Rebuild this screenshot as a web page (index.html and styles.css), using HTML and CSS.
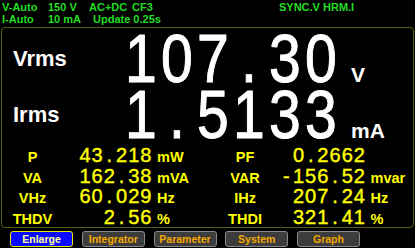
FILE: index.html
```html
<!DOCTYPE html>
<html lang="en">
<head>
  <meta charset="UTF-8">
  <meta name="viewport" content="width=device-width, initial-scale=1.0">
  <title>Power Meter</title>
  <link rel="stylesheet" href="styles.css">
</head>
<body>
  <div class="status">
    <div class="status-line">
      <span>V-Auto</span><span>150 V</span><span>AC+DC</span><span>CF3</span><span>SYNC.V</span><span>HRM.I</span>
    </div>
    <div class="status-line">
      <span>I-Auto</span><span>10 mA</span><span class="update">Update 0.25s</span>
    </div>
  </div>

  <div class="panel">
    <div class="main-row">
      <div class="main-label">Vrms</div>
      <div class="main-value"><span>1</span><span>0</span><span>7</span><span>.</span><span>3</span><span>0</span></div>
      <div class="main-unit">V</div>
    </div>
    <div class="main-row">
      <div class="main-label">Irms</div>
      <div class="main-value"><span>1</span><span>.</span><span>5</span><span>1</span><span>3</span><span>3</span></div>
      <div class="main-unit">mA</div>
    </div>

    <div class="readings">
      <div class="r-label">P</div>
      <div class="r-value"><span>4</span><span>3</span><span>.</span><span>2</span><span>1</span><span>8</span></div>
      <div class="r-unit">mW</div>
      <div class="r-label">PF</div>
      <div class="r-value"><span>0</span><span>.</span><span>2</span><span>6</span><span>6</span><span>2</span></div>
      <div class="r-unit"></div>

      <div class="r-label">VA</div>
      <div class="r-value"><span>1</span><span>6</span><span>2</span><span>.</span><span>3</span><span>8</span></div>
      <div class="r-unit">mVA</div>
      <div class="r-label">VAR</div>
      <div class="r-value"><span>-</span><span>1</span><span>5</span><span>6</span><span>.</span><span>5</span><span>2</span></div>
      <div class="r-unit">mvar</div>

      <div class="r-label">VHz</div>
      <div class="r-value"><span>6</span><span>0</span><span>.</span><span>0</span><span>2</span><span>9</span></div>
      <div class="r-unit">Hz</div>
      <div class="r-label">IHz</div>
      <div class="r-value"><span>2</span><span>0</span><span>7</span><span>.</span><span>2</span><span>4</span></div>
      <div class="r-unit">Hz</div>

      <div class="r-label">THDV</div>
      <div class="r-value"><span>2</span><span>.</span><span>5</span><span>6</span></div>
      <div class="r-unit">%</div>
      <div class="r-label">THDI</div>
      <div class="r-value"><span>3</span><span>2</span><span>1</span><span>.</span><span>4</span><span>1</span></div>
      <div class="r-unit">%</div>
    </div>
  </div>

  <div class="softkeys">
    <div class="key active">Enlarge</div>
    <div class="key">Integrator</div>
    <div class="key">Parameter</div>
    <div class="key">System</div>
    <div class="key">Graph</div>
  </div>
</body>
</html>
```

FILE: styles.css
```css
body {
  margin: 0;
  background-color: #000;
  font-family: "Liberation Sans", Arial, sans-serif;
  color: #fff;
  overflow: hidden;
}
.status {
  height: 27px;
  box-sizing: border-box;
  padding: 2px 0 0 2px;
  color: #22dd22;
  font-size: 11px;
  font-weight: bold;
  line-height: 11.5px;
}
.status-line {
  display: grid;
  grid-template-columns: 46px 41px 43px 147px 44px auto;
  white-space: nowrap;
}
.status-line .update {
  grid-column: span 2;
  padding-left: 4px;
}
.panel {
  margin-left: 1px;
  width: 413px;
  height: 201px;
  box-sizing: border-box;
  border: 1px solid #5c5c14;
  border-radius: 4px;
  padding: 2px 0 0 8px;
}
.main-row {
  display: flex;
  align-items: baseline;
  height: 56px;
}
.main-label {
  align-self: flex-start;
  width: 110px;
  padding-left: 3px;
  margin-top: 18px;
  font-size: 22px;
  font-weight: bold;
  line-height: 22px;
}
.main-value {
  display: flex;
  font-size: 68px;
  line-height: 56px;
  -webkit-text-stroke: 1px #fff;
}
.main-value span {
  display: inline-flex;
  justify-content: center;
  width: 36px;
  min-width: 0;
  transform: scaleX(0.84);
}
.main-unit {
  margin-left: 12px;
  font-size: 21px;
  font-weight: bold;
}
.readings {
  display: grid;
  grid-template-columns: 45px 97px 70.5px 45px 98px 1fr;
  grid-auto-rows: 20.5px;
  align-items: baseline;
  margin-top: 3px;
  color: #ffff00;
  line-height: 20.5px;
}
.r-label {
  text-align: center;
  font-size: 14.5px;
  font-weight: bold;
}
.r-value {
  display: flex;
  justify-content: flex-end;
  font-size: 20px;
  -webkit-text-stroke: 0.4px #ffff00;
}
.r-value span {
  display: inline-flex;
  justify-content: center;
  width: 12.2px;
}
.r-unit {
  padding-left: 5px;
  font-size: 14.5px;
  font-weight: bold;
}
.softkeys {
  display: flex;
  gap: 8.75px;
  margin-top: 3px;
  padding-left: 10px;
}
.key {
  width: 63px;
  height: 16px;
  box-sizing: border-box;
  border: 1px solid #8a8a8a;
  border-radius: 3px;
  background-color: #3c3c3c;
  color: #f5a800;
  font-size: 10.5px;
  font-weight: bold;
  line-height: 14px;
  text-align: center;
}
.key.active {
  border-color: #e8e800;
  background-color: #0a0aff;
  color: #ffff99;
}
```
